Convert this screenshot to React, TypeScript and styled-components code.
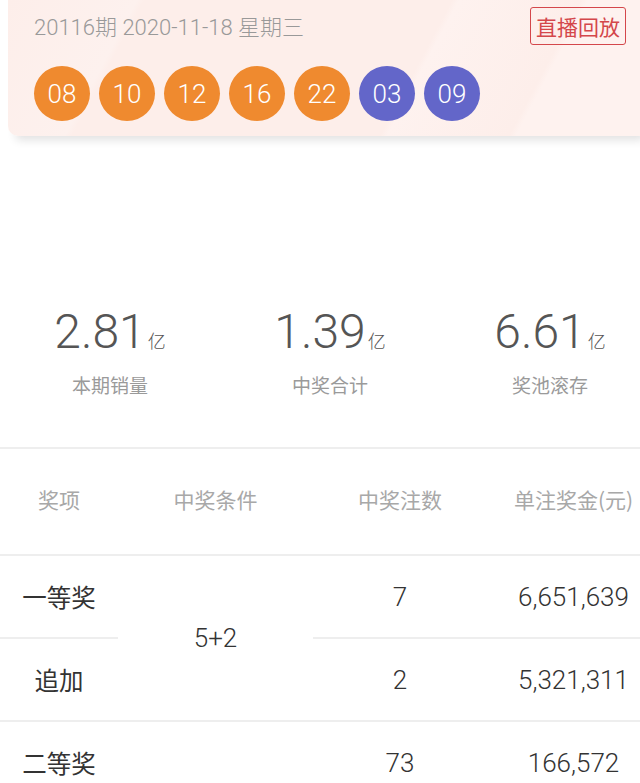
import styled, { createGlobalStyle } from "styled-components";

const GlobalStyle = createGlobalStyle`
  html, body {
    margin: 0;
    padding: 0;
    background: #fff;
    overflow: hidden;
  }
  body {
    font-family: Roboto, "Noto Sans CJK SC", sans-serif;
  }
`;

const Viewport = styled.div`
  width: 640px;
  height: 783px;
  overflow: hidden;
`;

const Page = styled.div`
  width: 660px;
`;

const DrawCard = styled.section`
  margin: 0 8px;
  padding: 7px 26px 15px;
  border-radius: 0 0 10px 10px;
  background: linear-gradient(
    118deg,
    #fdeeea 0%,
    #fdf1ee 18%,
    #fdeeea 19%,
    #fdeeea 62%,
    #fef2ef 63%,
    #fdeeea 80%,
    #fef2ef 81%
  );
  box-shadow: 0 12px 10px -8px rgba(0, 0, 0, 0.12);
`;

const TopRow = styled.div`
  display: flex;
  align-items: center;
  justify-content: space-between;
  height: 38px;
`;

const IssueText = styled.span`
  font-size: 22px;
  font-weight: 300;
  color: #999;
  margin-top: -2px;
`;

const ReplayButton = styled.button`
  height: 38px;
  padding: 0 5px;
  border: 1.5px solid #d4474b;
  border-radius: 3px;
  background: transparent;
  color: #d4474b;
  font-family: "Noto Sans CJK SC", sans-serif;
  font-size: 21px;
  line-height: 1;
`;

const BallRow = styled.div`
  display: flex;
  gap: 9px;
  margin-top: 21px;
`;

const Ball = styled.span<{ $blue?: boolean }>`
  width: 56px;
  height: 55px;
  border-radius: 50%;
  display: flex;
  align-items: center;
  justify-content: center;
  background: ${(p) => (p.$blue ? "#6366c9" : "#ef8a2f")};
  color: #fff;
  font-size: 26px;
  font-weight: 300;
`;

const Stats = styled.section`
  display: grid;
  grid-template-columns: repeat(3, 1fr);
  padding: 171px 0 50px;
  border-bottom: 2px solid #eeeeee;
`;

const Stat = styled.div`
  display: flex;
  flex-direction: column;
  align-items: center;
  gap: 16px;
`;

const StatValue = styled.div`
  height: 50px;
  line-height: 50px;
  font-size: 48px;
  font-weight: 300;
  color: #555;
  white-space: nowrap;
`;

const Unit = styled.span`
  font-family: "Noto Sans CJK SC", sans-serif;
  font-size: 18px;
  font-weight: 300;
  margin-left: 2px;
`;

const StatLabel = styled.div`
  font-family: "Noto Sans CJK SC", sans-serif;
  font-size: 19px;
  line-height: 24px;
  color: #9a9a9a;
`;

const PrizeTable = styled.table`
  width: 660px;
  table-layout: fixed;
  border-collapse: collapse;
`;

const HeadCell = styled.th`
  height: 100px;
  padding: 0 0 5px;
  font-family: "Noto Sans CJK SC", sans-serif;
  font-size: 21px;
  font-weight: 400;
  color: #a8a8a8;
  text-align: center;
  white-space: nowrap;
  border-bottom: 2px solid #eeeeee;
`;

const Cell = styled.td<{ $cjk?: boolean }>`
  height: 81px;
  padding: 0;
  font-family: ${(p) => (p.$cjk ? '"Noto Sans CJK SC", sans-serif' : 'Roboto, sans-serif')};
  font-size: ${(p) => (p.$cjk ? "24.5px" : "26px")};
  font-weight: ${(p) => (p.$cjk ? 400 : 300)};
  color: #333;
  text-align: center;
  white-space: nowrap;
  border-bottom: 2px solid #eeeeee;
`;

const balls = [
  { n: "08" },
  { n: "10" },
  { n: "12" },
  { n: "16" },
  { n: "22" },
  { n: "03", blue: true },
  { n: "09", blue: true },
];

const stats = [
  { value: "2.81", label: "本期销量" },
  { value: "1.39", label: "中奖合计" },
  { value: "6.61", label: "奖池滚存" },
];

const App = () => {
  return (
    <Viewport>
      <GlobalStyle />
      <Page>
        <DrawCard>
          <TopRow>
            <IssueText>20116期 2020-11-18 星期三</IssueText>
            <ReplayButton>直播回放</ReplayButton>
          </TopRow>
          <BallRow>
            {balls.map((b, i) => (
              <Ball key={i} $blue={b.blue}>
                {b.n}
              </Ball>
            ))}
          </BallRow>
        </DrawCard>

        <Stats>
          {stats.map((s) => (
            <Stat key={s.label}>
              <StatValue>
                {s.value}
                <Unit>亿</Unit>
              </StatValue>
              <StatLabel>{s.label}</StatLabel>
            </Stat>
          ))}
        </Stats>

        <PrizeTable>
          <colgroup>
            <col style={{ width: 118 }} />
            <col style={{ width: 195 }} />
            <col style={{ width: 174 }} />
            <col style={{ width: 173 }} />
          </colgroup>
          <thead>
            <tr>
              <HeadCell>奖项</HeadCell>
              <HeadCell>中奖条件</HeadCell>
              <HeadCell>中奖注数</HeadCell>
              <HeadCell>单注奖金(元)</HeadCell>
            </tr>
          </thead>
          <tbody>
            <tr>
              <Cell $cjk>一等奖</Cell>
              <Cell rowSpan={2}>5+2</Cell>
              <Cell>7</Cell>
              <Cell>6,651,639</Cell>
            </tr>
            <tr>
              <Cell $cjk>追加</Cell>
              <Cell>2</Cell>
              <Cell>5,321,311</Cell>
            </tr>
            <tr>
              <Cell $cjk>二等奖</Cell>
              <Cell />
              <Cell>73</Cell>
              <Cell>166,572</Cell>
            </tr>
          </tbody>
        </PrizeTable>
      </Page>
    </Viewport>
  );
};

export default App;
